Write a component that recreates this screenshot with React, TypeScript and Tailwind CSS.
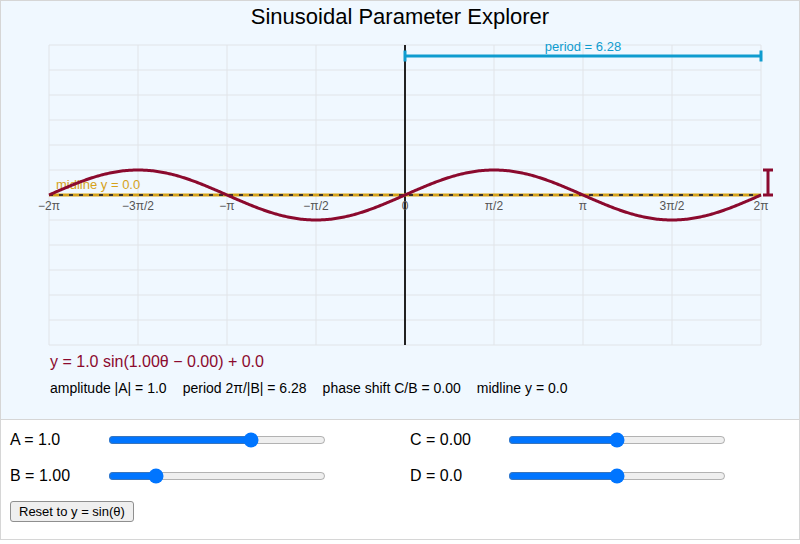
import { useState } from 'react';

// plot geometry (svg viewBox uses page coordinates)
const LEFT = 49, RIGHT = 761, TOP = 45, BOTTOM = 345;
const X0 = 405, Y0 = 195;
const PX_PER_RAD = 178 / Math.PI;
const PX_PER_UNIT = 25;

const sx = (t: number) => X0 + t * PX_PER_RAD;
const sy = (v: number) => Y0 - v * PX_PER_UNIT;

const TICKS = [
  { t: -2 * Math.PI, label: '−2π' },
  { t: -1.5 * Math.PI, label: '−3π/2' },
  { t: -Math.PI, label: '−π' },
  { t: -0.5 * Math.PI, label: '−π/2' },
  { t: 0, label: '0' },
  { t: 0.5 * Math.PI, label: 'π/2' },
  { t: Math.PI, label: 'π' },
  { t: 1.5 * Math.PI, label: '3π/2' },
  { t: 2 * Math.PI, label: '2π' },
];

const DEFAULTS = { A: 1, B: 1, C: 0, D: 0 };

function Plot({ A, B, C, D }: { A: number; B: number; C: number; D: number }) {
  const pts: string[] = [];
  for (let i = 0; i <= 480; i++) {
    const t = -2 * Math.PI + (i / 480) * 4 * Math.PI;
    pts.push(`${sx(t).toFixed(2)},${sy(A * Math.sin(B * t - C) + D).toFixed(2)}`);
  }
  const shift = C / B;
  const period = (2 * Math.PI) / Math.abs(B);
  const pStart = sx(shift);
  const pEnd = sx(shift + period);
  const mid = sy(D);
  const ampTop = sy(D + Math.abs(A));

  return (
    <svg width={798} height={321} viewBox="1 31 798 321" className="block">
      {/* grid */}
      {Array.from({ length: 13 }, (_, k) => (
        <line key={'h' + k} x1={LEFT} x2={RIGHT} y1={TOP + k * 25} y2={TOP + k * 25} stroke="#e1e4e8" strokeWidth={1} />
      ))}
      {Array.from({ length: 9 }, (_, k) => (
        <line key={'v' + k} x1={LEFT + k * 89} x2={LEFT + k * 89} y1={TOP} y2={BOTTOM} stroke="#e1e4e8" strokeWidth={1} />
      ))}

      {/* y axis */}
      <line x1={X0} x2={X0} y1={TOP} y2={BOTTOM} stroke="#222" strokeWidth={2} />

      {/* midline */}
      <line x1={LEFT} x2={RIGHT} y1={mid} y2={mid} stroke="#d6a21a" strokeWidth={3} />
      <line x1={LEFT} x2={RIGHT} y1={mid} y2={mid} stroke="#333" strokeWidth={2} strokeDasharray="4 6" />
      <text x={56} y={mid - 6} fontSize={13} fill="#d6a21a">midline y = {D.toFixed(1)}</text>

      {/* tick labels */}
      {TICKS.map(tk => (
        <text key={tk.label} x={sx(tk.t)} y={Y0 + 15} fontSize={12} fill="#555" textAnchor="middle">{tk.label}</text>
      ))}

      {/* curve */}
      <polyline points={pts.join(' ')} fill="none" stroke="#8b0a2e" strokeWidth={3} strokeLinejoin="round" />

      {/* period bar */}
      <line x1={pStart} x2={pEnd} y1={56} y2={56} stroke="#0f9ccf" strokeWidth={3} />
      <line x1={pStart} x2={pStart} y1={50.5} y2={61.5} stroke="#0f9ccf" strokeWidth={3} />
      <line x1={pEnd} x2={pEnd} y1={50.5} y2={61.5} stroke="#0f9ccf" strokeWidth={3} />
      <text x={(pStart + pEnd) / 2} y={51} fontSize={13} fill="#0f9ccf" textAnchor="middle">period = {period.toFixed(2)}</text>

      {/* amplitude marker */}
      <line x1={768} x2={768} y1={ampTop} y2={mid} stroke="#8b0a2e" strokeWidth={3} />
      <line x1={763} x2={773} y1={ampTop} y2={ampTop} stroke="#8b0a2e" strokeWidth={3} />
      <line x1={763} x2={773} y1={mid} y2={mid} stroke="#8b0a2e" strokeWidth={3} />
    </svg>
  );
}

function ParamSlider({ label, value, min, max, step, onChange }: {
  label: string; value: number; min: number; max: number; step: number; onChange: (v: number) => void;
}) {
  return (
    <div className="flex items-center h-[22px]">
      <span className="w-[98px] text-[16px] leading-[22px] text-black">{label}</span>
      <input
        type="range"
        min={min}
        max={max}
        step={step}
        value={value}
        onChange={e => onChange(parseFloat(e.target.value))}
        className="w-[218px] m-0 accent-[#0075ff]"
      />
    </div>
  );
}

export default function App() {
  const [p, setP] = useState(DEFAULTS);
  const { A, B, C, D } = p;
  const set = (k: keyof typeof DEFAULTS) => (v: number) => setP(prev => ({ ...prev, [k]: v }));

  return (
    <div className="w-[800px] h-[544px] bg-white font-['Liberation_Sans',Arial,sans-serif]">
      <div className="h-[420px] border border-[#d6d6d6] bg-[#f0f8ff] flex flex-col">
        <div className="h-[30px] flex items-center justify-center text-[22px] text-black">Sinusoidal Parameter Explorer</div>
        <Plot A={A} B={B} C={C} D={D} />
        <div className="h-[20px] leading-[20px] pl-[49px] text-[16px] text-[#8b0a2e]">
          y = {A.toFixed(1)} sin({B.toFixed(2)}θ − {C.toFixed(2)}) + {D.toFixed(1)}
        </div>
        <div className="mt-[8px] h-[16px] leading-[16px] pl-[49px] text-[14px] text-black flex gap-[16px]">
          <span>amplitude |A| = {Math.abs(A).toFixed(1)}</span>
          <span>period 2π/|B| = {((2 * Math.PI) / Math.abs(B)).toFixed(2)}</span>
          <span>phase shift C/B = {(C / B).toFixed(2)}</span>
          <span>midline y = {D.toFixed(1)}</span>
        </div>
      </div>

      <div className="h-[120px] border-x border-b border-[#d6d6d6] pt-[9px] px-[9px]">
        <div className="grid grid-cols-[400px_1fr] gap-y-[14px]">
          <ParamSlider label={`A = ${A.toFixed(1)}`} value={A} min={-3} max={3} step={0.1} onChange={set('A')} />
          <ParamSlider label={`C = ${C.toFixed(2)}`} value={C} min={-3.14} max={3.14} step={0.01} onChange={set('C')} />
          <ParamSlider label={`B = ${B.toFixed(2)}`} value={B} min={0.25} max={4} step={0.05} onChange={set('B')} />
          <ParamSlider label={`D = ${D.toFixed(1)}`} value={D} min={-3} max={3} step={0.1} onChange={set('D')} />
        </div>
        <button
          onClick={() => setP(DEFAULTS)}
          className="mt-[14px] h-[21px] px-[8px] text-[13px] leading-[19px] text-black bg-[#efefef] border border-[#8f8f8f] rounded-[3px]"
        >
          Reset to y = sin(θ)
        </button>
      </div>
    </div>
  );
}
